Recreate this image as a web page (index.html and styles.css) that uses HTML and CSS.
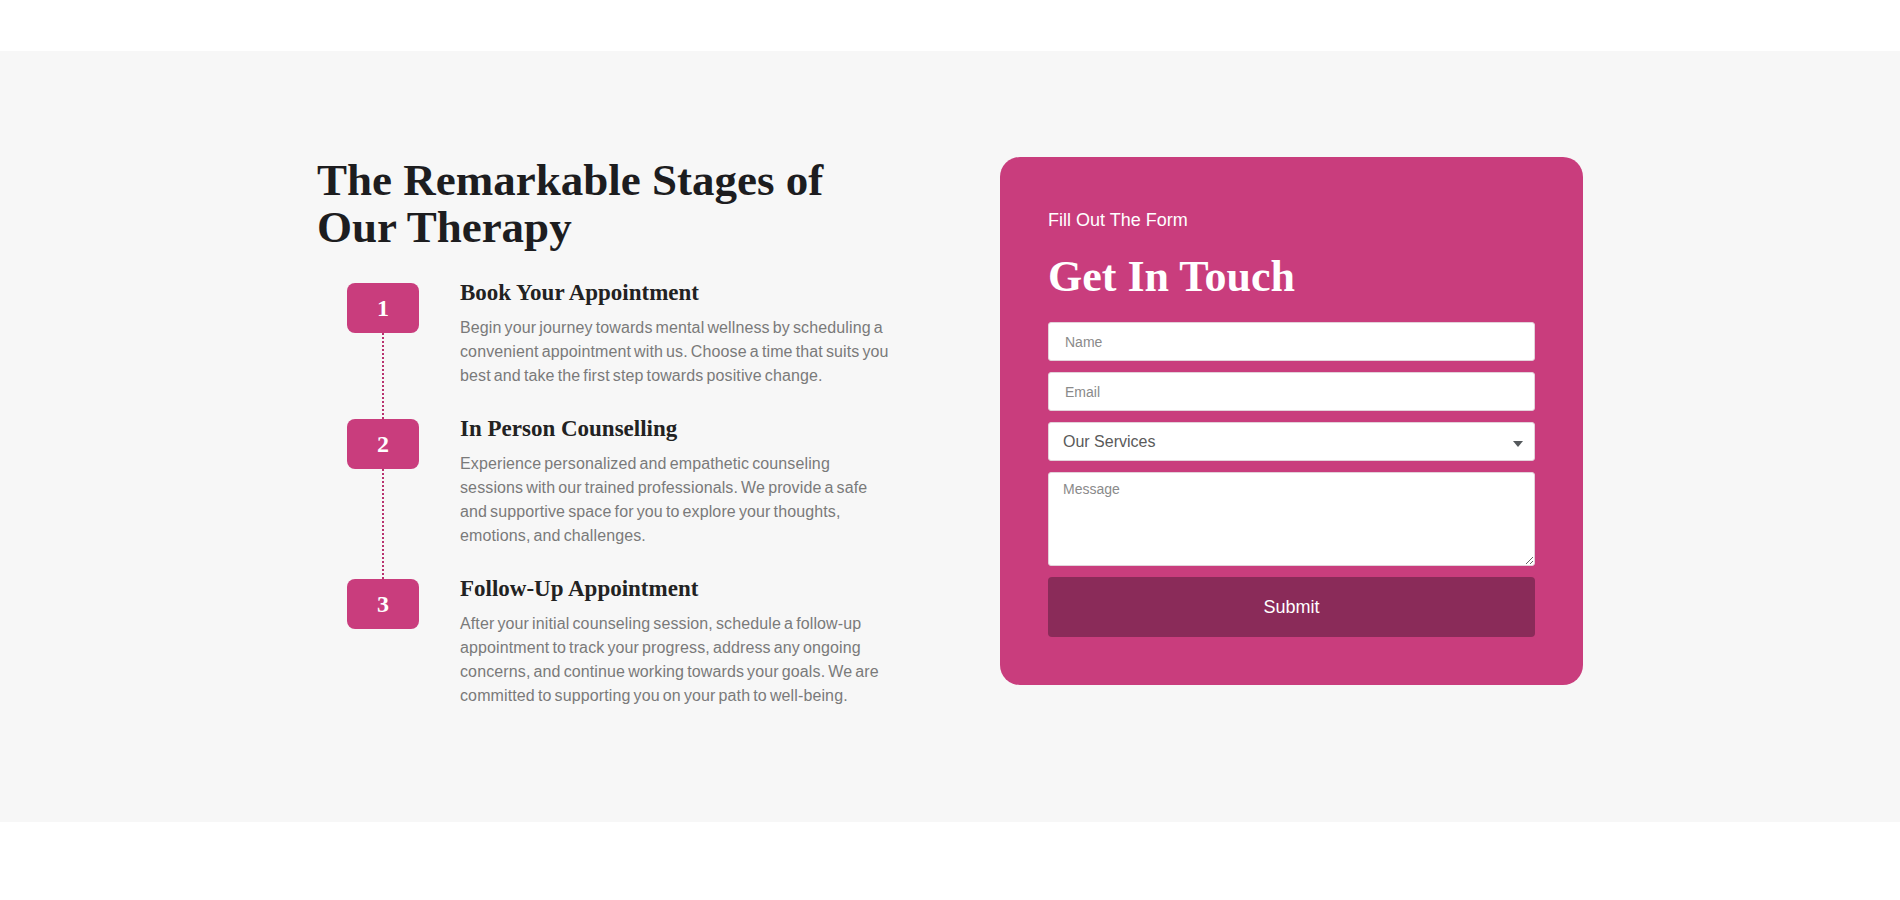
FILE: index.html
```html
<!DOCTYPE html>
<html lang="en">
<head>
<meta charset="utf-8">
<title>Our Therapy</title>
<link rel="stylesheet" href="styles.css">
</head>
<body>
<div class="page">
  <section class="therapy">
    <div class="therapy-inner">
      <div class="stages">
        <h2 class="stages-title">The Remarkable Stages of Our Therapy</h2>
        <ol class="steps">
          <li class="step">
            <div class="step-marker">
              <span class="step-badge">1</span>
              <span class="step-line"></span>
            </div>
            <div class="step-body">
              <h3 class="step-title">Book Your Appointment</h3>
              <p class="step-text">Begin your journey towards mental wellness by scheduling a convenient appointment with us. Choose a time that suits you best and take the first step towards positive change.</p>
            </div>
          </li>
          <li class="step">
            <div class="step-marker">
              <span class="step-badge">2</span>
              <span class="step-line"></span>
            </div>
            <div class="step-body">
              <h3 class="step-title">In Person Counselling</h3>
              <p class="step-text">Experience personalized and empathetic counseling sessions with our trained professionals. We provide a safe and supportive space for you to explore your thoughts, emotions, and challenges.</p>
            </div>
          </li>
          <li class="step">
            <div class="step-marker">
              <span class="step-badge">3</span>
            </div>
            <div class="step-body">
              <h3 class="step-title">Follow-Up Appointment</h3>
              <p class="step-text">After your initial counseling session, schedule a follow-up appointment to track your progress, address any ongoing concerns, and continue working towards your goals. We are committed to supporting you on your path to well-being.</p>
            </div>
          </li>
        </ol>
      </div>

      <div class="contact-card">
        <p class="contact-kicker">Fill Out The Form</p>
        <h2 class="contact-title">Get In Touch</h2>
        <form class="contact-form">
          <input class="field" type="text" placeholder="Name">
          <input class="field" type="email" placeholder="Email">
          <div class="select-wrap">
            <select class="field field-select">
              <option>Our Services</option>
              <option>Individual Therapy</option>
              <option>Couples Counselling</option>
              <option>Family Therapy</option>
            </select>
            <svg class="select-caret" width="10" height="6" viewBox="0 0 10 6" aria-hidden="true"><path d="M0 0h10L5 6z" fill="#55595c"/></svg>
          </div>
          <textarea class="field field-message" placeholder="Message"></textarea>
          <button class="submit" type="button">Submit</button>
        </form>
      </div>
    </div>
  </section>
</div>
</body>
</html>
```

FILE: styles.css
```css
* {
  box-sizing: border-box;
}

html,
body {
  margin: 0;
  background: #ffffff;
}

body {
  font-family: "Liberation Sans", Arial, sans-serif;
  color: #1f1f1f;
}

.page {
  padding: 51px 0 78px;
}

.therapy {
  background: #f7f7f7;
  padding: 106px 0 114px;
}

.therapy-inner {
  width: 1266px;
  margin: 0 auto;
  display: grid;
  grid-template-columns: 583px 583px;
  column-gap: 100px;
  align-items: start;
}

/* left column: heading + numbered stages */
.stages-title {
  margin: 0 0 29px;
  max-width: 545px;
  font-family: "Liberation Serif", "Times New Roman", serif;
  font-weight: 700;
  font-size: 45px;
  line-height: 47px;
  color: #1d1d1f;
}

.steps {
  list-style: none;
  margin: 0;
  padding: 0 0 0 30px;
}

.step {
  display: grid;
  grid-template-columns: 72px 433px;
  column-gap: 41px;
}

.step-marker {
  display: flex;
  flex-direction: column;
  align-items: center;
}

.step-badge {
  flex: none;
  margin-top: 3px;
  width: 72px;
  height: 50px;
  border-radius: 8px;
  background: #c93d7d;
  color: #ffffff;
  display: flex;
  align-items: center;
  justify-content: center;
  font-family: "Liberation Serif", "Times New Roman", serif;
  font-weight: 700;
  font-size: 24px;
}

/* dotted connector running down to the next badge */
.step-line {
  flex: 1;
  width: 0;
  border-left: 2px dotted #b8336f;
  margin-bottom: -3px;
}

.step-body {
  padding-bottom: 28px;
}

.step:last-child .step-body {
  padding-bottom: 0;
}

.step-title {
  margin: 0 0 10px;
  font-family: "Liberation Serif", "Times New Roman", serif;
  font-weight: 700;
  font-size: 23px;
  line-height: 26px;
  color: #222222;
}

.step-text {
  margin: 0;
  font-size: 16px;
  line-height: 24px;
  letter-spacing: 0.12px;
  word-spacing: -1.5px;
  color: #7a7a7a;
}

/* right column: contact form card */
.contact-card {
  background: #c93d7d;
  border-radius: 20px;
  padding: 50px 48px 48px;
  color: #ffffff;
}

.contact-kicker {
  margin: 0 0 19px;
  font-size: 18px;
  line-height: 27px;
}

.contact-title {
  margin: 0 0 21px;
  font-family: "Liberation Serif", "Times New Roman", serif;
  font-weight: 700;
  font-size: 44px;
  line-height: 48px;
}

.contact-form {
  display: flex;
  flex-direction: column;
  gap: 11px;
}

.field {
  display: block;
  width: 100%;
  height: 39px;
  margin: 0;
  padding: 0 16px;
  border: 1px solid #e2d2da;
  border-radius: 3px;
  background: #ffffff;
  font-family: "Liberation Sans", Arial, sans-serif;
  font-size: 14px;
  color: #555555;
  outline: none;
}

.field::placeholder {
  color: #8a8a8a;
}

.select-wrap {
  position: relative;
}

.field-select {
  appearance: none;
  -webkit-appearance: none;
  padding: 0 14px;
  font-size: 16px;
  color: #5a5a5a;
}

.select-caret {
  position: absolute;
  right: 12px;
  top: 19px;
  pointer-events: none;
}

.field-message {
  height: 94px;
  padding: 7px 14px;
  resize: vertical;
  line-height: 18px;
}

.submit {
  margin-top: 0;
  height: 60px;
  border: none;
  border-radius: 4px;
  background: #8a2b59;
  color: #ffffff;
  font-family: "Liberation Sans", Arial, sans-serif;
  font-size: 18px;
  cursor: pointer;
}
```
